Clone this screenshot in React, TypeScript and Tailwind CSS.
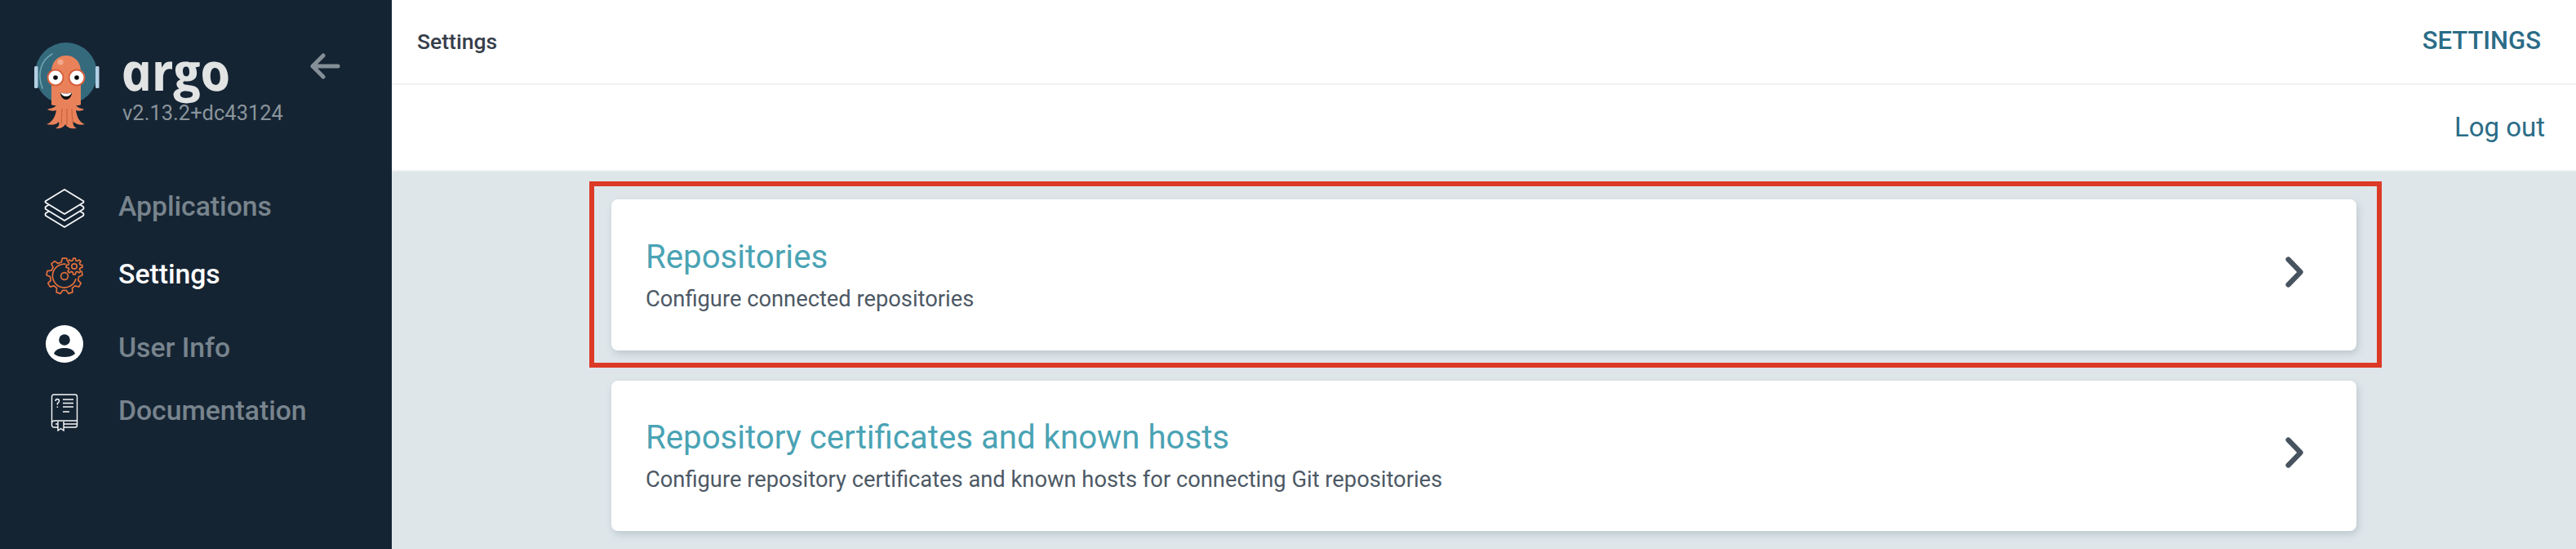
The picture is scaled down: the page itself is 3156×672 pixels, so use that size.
import React from "react";

const font = "font-['Roboto',sans-serif]";

function gearPath(cx: number, cy: number, outer: number, inner: number, teeth: number) {
  const pts: string[] = [];
  const step = (Math.PI * 2) / teeth;
  for (let i = 0; i < teeth; i++) {
    const a = i * step - Math.PI / 2;
    const list: [number, number][] = [
      [inner, a - step * 0.32],
      [outer, a - step * 0.17],
      [outer, a + step * 0.17],
      [inner, a + step * 0.32],
    ];
    list.forEach(([r, t]) => pts.push(`${(cx + r * Math.cos(t)).toFixed(2)} ${(cy + r * Math.sin(t)).toFixed(2)}`));
  }
  return "M" + pts.join("L") + "Z";
}

function Logo() {
  return (
    <svg viewBox="42 52 80 106" className="w-[80px] h-[106px] shrink-0">
      <circle cx="81" cy="90" r="38" fill="#356a7d" />
      <path d="M52 108 C45 90 50 74 64 66" fill="none" stroke="#6fa3ad" strokeWidth="1.6" strokeLinecap="round" />
      <rect x="42" y="81" width="4.5" height="27" rx="1.5" fill="#b4cfe4" />
      <rect x="117" y="81" width="4.5" height="27" rx="1.5" fill="#b4cfe4" />
      <path d="M63 88 C63 75 71 68 81 68 C91 68 99 75 99 88 L99 128 C99 130 63 130 63 128 Z" fill="#e9825a" />
      <circle cx="74" cy="76" r="3.6" fill="#f2a88b" />
      <path d="M70 128 C66 133 62 132 58 134 C62 136 66 136 69 135 C68 142 64 150 57 152 C64 154 70 152 72 149 C73 153 72 155 68 157 C74 158 78 156 80 152 C82 156 86 158 94 157 C90 155 89 152 90 149 C93 152 99 154 104 152 C97 150 94 142 93 135 C96 136 100 136 103 134 C99 132 96 133 92 128 Z" fill="#e9825a" />
      <path d="M76 133 L75 152 M82 133 L82 153 M88 133 L89 152" stroke="#c9623f" strokeWidth="1.2" fill="none" />
      <circle cx="68" cy="95" r="10.5" fill="#d85f3c" />
      <circle cx="94" cy="95" r="10.5" fill="#d85f3c" />
      <circle cx="68" cy="95" r="8.5" fill="#fff" />
      <circle cx="94" cy="95" r="8.5" fill="#fff" />
      <circle cx="68" cy="95" r="2.8" fill="#0c0c0c" />
      <circle cx="94" cy="95" r="2.8" fill="#0c0c0c" />
      <path d="M74 113 C78 115 84 115 88 113 C88 119 84 122 81 122 C78 122 74 119 74 113 Z" fill="#111" />
      <path d="M74 113 C78 115 84 115 88 113 C87 116 84 118 81 118 C78 118 75 116 74 113 Z" fill="#fff" />
    </svg>
  );
}

function LayersIcon() {
  return (
    <svg viewBox="0 0 50 50" className="w-[50px] h-[50px]" fill="none" stroke="#f7f8f9" strokeWidth="1.8" strokeLinejoin="round">
      <path d="M25 2 L48 16 Q49 17 48 18 L25 32 L2 18 Q1 17 2 16 Z" />
      <path d="M6 20.5 L2 23 Q1 24.5 2 26 L25 40 L48 26 Q49 24.5 48 23 L44 20.5" />
      <path d="M6 28.5 L2 31 Q1 32.5 2 34 L25 48 L48 34 Q49 32.5 48 31 L44 28.5" />
    </svg>
  );
}

function GearIcon() {
  return (
    <svg viewBox="56 315 46 46" className="w-[46px] h-[46px]" fill="none" stroke="#e2703c" strokeWidth="1.7" strokeLinejoin="round">
      <path d={gearPath(79, 338, 22, 17.5, 9)} />
      <path d="M84 324 A 14.5 14.5 0 1 0 93 341" />
      <circle cx="79" cy="338" r="4.4" />
      <circle cx="91" cy="326" r="11" fill="#152433" stroke="none" />
      <path d={gearPath(91, 326, 10, 7.4, 8)} />
      <circle cx="91" cy="326" r="3.2" />
    </svg>
  );
}

function UserIcon() {
  return (
    <svg viewBox="0 0 46 46" className="w-[46px] h-[46px]">
      <circle cx="23" cy="23" r="23" fill="#fff" />
      <circle cx="23" cy="18" r="6.8" fill="#152433" />
      <path d="M10 35 C12 29 18 28 23 28 C28 28 34 29 36 35 C32 38 28 39 23 39 C18 39 14 38 10 35 Z" fill="#152433" />
    </svg>
  );
}

function DocIcon() {
  return (
    <svg viewBox="0 0 34 46" className="w-[34px] h-[46px]" fill="none" stroke="#f7f8f9" strokeWidth="1.4">
      <rect x="1.5" y="1" width="31" height="40" rx="2.5" />
      <path d="M1.5 36 Q1.5 33 5 33 L32.5 33 M6 37 L32 37" />
      <path d="M9 34 L9 45 L12.5 42.5 L16 45 L16 34" fill="#152433" />
      <path d="M6 9 Q6 6.5 8.2 6.5 Q10.5 6.5 10.5 9 Q10.5 10.6 8.4 11.6 L8.4 13.6 M8.4 15.5 L8.4 17" strokeWidth="1.4" />
      <path d="M15 7 L28 7 M15 11.5 L28 11.5 M15 16 L28 16 M15 22 L23 22" />
    </svg>
  );
}

function Chevron() {
  return (
    <svg viewBox="0 0 22 38" className="w-[22px] h-[38px] mb-[8px]" fill="none" stroke="#47535f" strokeWidth="6.2" strokeLinecap="round" strokeLinejoin="round">
      <path d="M3.5 3.5 L18.5 19 L3.5 34.5" />
    </svg>
  );
}

function NavItem({ icon, label, active, className, iconClass }: { icon: React.ReactNode; label: string; active?: boolean; className?: string; iconClass?: string }) {
  return (
    <div className={"flex items-center h-[78px] " + (className ?? "")}>
      <div className={"w-[145px] flex justify-center pl-[21px] pr-[8px] " + (iconClass ?? "")}>{icon}</div>
      <span className={"text-[33.7px] font-medium leading-none " + (active ? "text-white" : "text-[#78848d]")}>{label}</span>
    </div>
  );
}

function Card({ title, sub, h, children }: { title: string; sub: string; h: string; children?: React.ReactNode }) {
  return (
    <div className={"relative w-[2138px] bg-white rounded-[8px] shadow-[2px_4px_8px_rgba(90,110,125,0.25)] flex items-center justify-between pl-[42px] pr-[65px] " + h}>
      <div className="flex flex-col mt-[2px]">
        <div className="text-[40.2px] font-normal text-[#4aa3b4] leading-[46px]">{title}</div>
        <div className="text-[27.3px] text-[#4d5965] leading-[36px] mt-[10px]">{sub}</div>
      </div>
      <Chevron />
      {children}
    </div>
  );
}

export default function App() {
  return (
    <div className={"flex w-[3156px] h-[672px] overflow-hidden bg-[#dee6ea] " + font}>
      <aside className="w-[480px] shrink-0 bg-[#152433] flex flex-col">
        <div className="flex pt-[52px] pl-[42px] h-[214px]">
          <Logo />
          <div className="ml-[28px] flex flex-col w-[200px]">
            <div className="h-[73px] flex items-center">
              <span className="font-['Open_Sans',sans-serif] italic font-bold text-[64px] leading-none text-[#e2e4e4] -skew-x-[-12deg] mt-[-4px] tracking-[-1px] ml-[-3px]">argo</span>
            </div>
            <div className="text-[25.3px] leading-[28px] text-[#8a949b] tracking-[0.1px]">v2.13.2+dc43124</div>
          </div>
          <svg viewBox="0 0 38 32" className="w-[38px] h-[32px] mt-[13px] ml-[29px]" fill="none" stroke="#848f97" strokeWidth="5" strokeLinecap="round" strokeLinejoin="round">
            <path d="M35 16 L4 16 M17 3 L4 16 L17 29" />
          </svg>
        </div>
        <nav className="flex flex-col">
          <NavItem icon={<LayersIcon />} label="Applications" iconClass="mt-[3px]" />
          <NavItem icon={<GearIcon />} label="Settings" active className="mt-[5px]" iconClass="mt-[4px]" />
          <NavItem icon={<UserIcon />} label="User Info" className="mt-[12px]" iconClass="mb-[10px]" />
          <NavItem icon={<DocIcon />} label="Documentation" className="mt-[-1px]" iconClass="mt-[4px]" />
        </nav>
      </aside>
      <main className="flex-1 flex flex-col min-w-0">
        <header className="h-[104px] bg-white border-b-2 border-[#f0f2f5] flex items-center justify-between pl-[31px] pr-[43px]">
          <span className="text-[26.5px] font-medium text-[#363d4a]">Settings</span>
          <span className="text-[31px] font-medium text-[#2b6c87] mb-[2px]">SETTINGS</span>
        </header>
        <div className="h-[106px] bg-white border-b-2 border-[#eef1f3] flex items-center justify-end pr-[38px]">
          <span className="text-[33px] text-[#2b6c87]">Log out</span>
        </div>
        <div className="flex-1 flex flex-col items-center pt-[34px] gap-[37px]">
          <Card title="Repositories" sub="Configure connected repositories" h="h-[185px]">
            <div className="absolute top-[-22px] bottom-[-21px] left-[-27px] right-[-31px] border-[6px] border-[#dc3a26] pointer-events-none" />
          </Card>
          <Card title="Repository certificates and known hosts" sub="Configure repository certificates and known hosts for connecting Git repositories" h="h-[184px]" />
        </div>
      </main>
    </div>
  );
}
